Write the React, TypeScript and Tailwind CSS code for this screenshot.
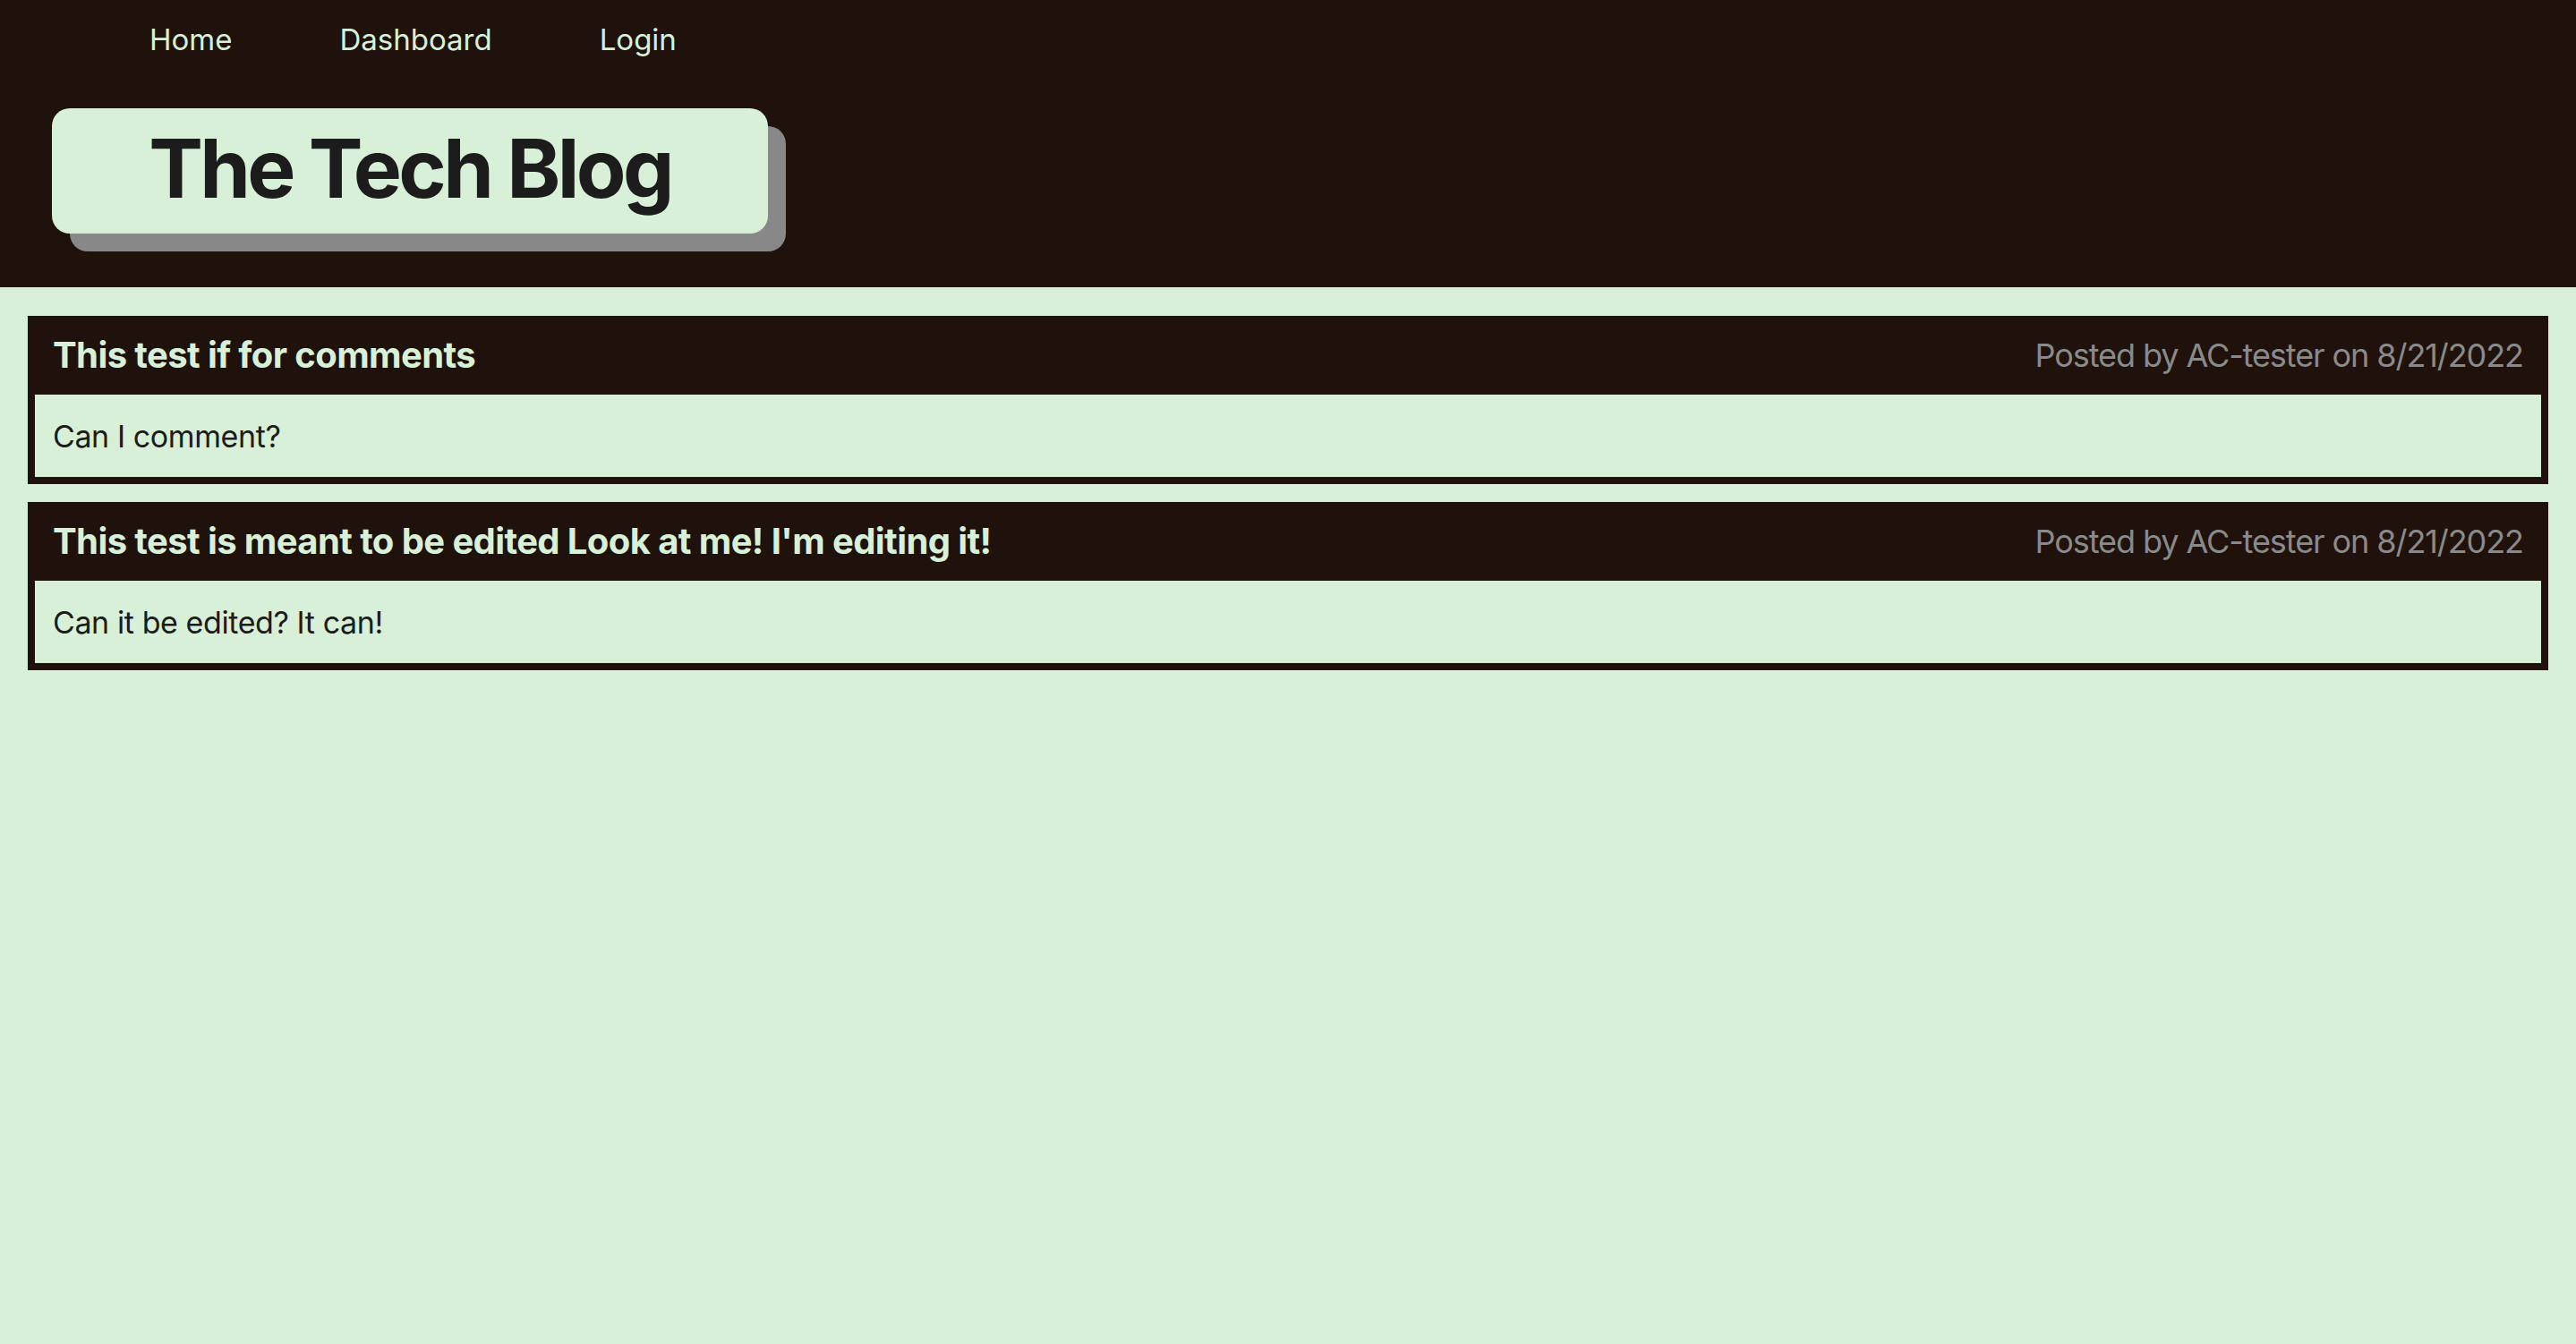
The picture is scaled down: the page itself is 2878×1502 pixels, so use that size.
import React from 'react';

interface Post {
  title: string;
  author: string;
  date: string;
  body: string;
}

const posts: Post[] = [
  { title: 'This test if for comments', author: 'AC-tester', date: '8/21/2022', body: 'Can I comment?' },
  {
    title: "This test is meant to be edited Look at me! I'm editing it!",
    author: 'AC-tester',
    date: '8/21/2022',
    body: 'Can it be edited? It can!',
  },
];

const PostCard: React.FC<{ post: Post }> = ({ post }) => {
  return (
    <div className="border-[8px] border-t-0 border-[#1f120c]">
      <div className="flex h-[88px] items-center justify-between bg-[#1f120c] px-[20px]">
        <h2 className="text-[40px] font-bold tracking-[-0.015em] text-[#d8efd8]">{post.title}</h2>
        <span className="text-[36px] tracking-[-0.03em] text-[#8a8a8a]">
          Posted by {post.author} on {post.date}
        </span>
      </div>
      <div className="flex h-[92px] items-center bg-[#d8efd8] px-[20px]">
        <p className="text-[34px] tracking-[-0.012em] text-[#1c1c1c]">{post.body}</p>
      </div>
    </div>
  );
};

const App: React.FC = () => {
  return (
    <div className="min-h-screen bg-[#d8efd8] font-['Inter',sans-serif]">
      <header className="h-[321px] bg-[#1f120c]">
        <nav className="flex h-[90px] items-center gap-[120px] pl-[167px] text-[33px] text-[#d8efd8]">
          <a href="#">Home</a>
          <a href="#">Dashboard</a>
          <a href="#">Login</a>
        </nav>
        <div className="ml-[58px] mt-[31px] flex h-[140px] w-[800px] items-center justify-center rounded-[20px] bg-[#d8efd8] shadow-[20px_20px_0_0_#888888]">
          <h1 className="pb-[6px] text-[91px] font-bold tracking-[-0.04em] text-[#1c1c1c]">The Tech Blog</h1>
        </div>
      </header>
      <main className="flex flex-col gap-[20px] px-[31px] pt-[32px]">
        {posts.map((post, i) => (
          <PostCard key={i} post={post} />
        ))}
      </main>
    </div>
  );
};

export default App;
